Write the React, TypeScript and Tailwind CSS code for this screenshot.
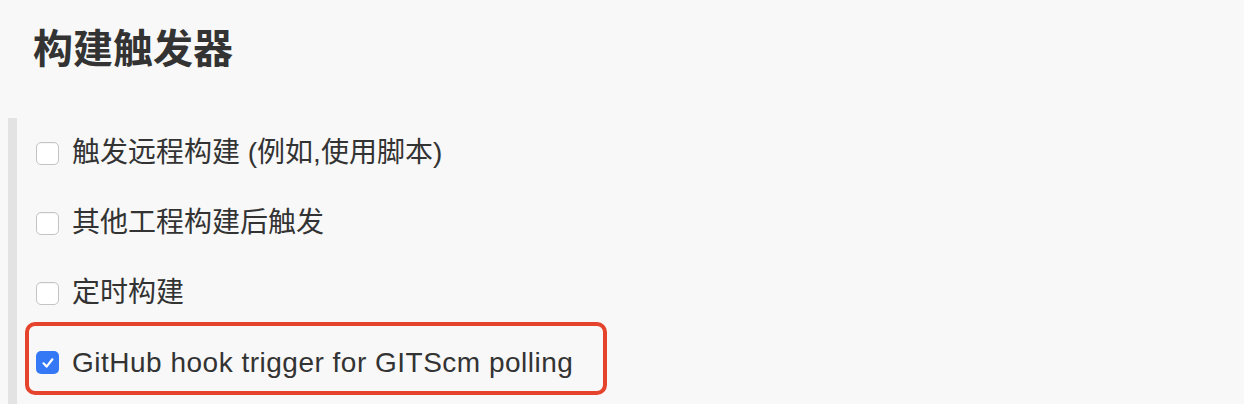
import React from 'react';

type Trigger = {
  id: number;
  label: string;
  checked: boolean;
};

const triggers: Trigger[] = [
  { id: 1, label: '触发远程构建 (例如,使用脚本)', checked: false },
  { id: 2, label: '其他工程构建后触发', checked: false },
  { id: 3, label: '定时构建', checked: false },
  { id: 4, label: 'GitHub hook trigger for GITScm polling', checked: true },
];

const Checkbox: React.FC<{ checked: boolean }> = ({ checked }) =>
  checked ? (
    <span className="flex h-[23px] w-[23px] shrink-0 items-center justify-center rounded-[5px] bg-[#3478f6]">
      <svg width="16" height="16" viewBox="0 0 16 16" fill="none">
        <path d="M3.5 8.3 L6.6 11.6 L12.4 4.3" stroke="white" strokeWidth="2.2" strokeLinecap="round" strokeLinejoin="round" />
      </svg>
    </span>
  ) : (
    <span className="block h-[23px] w-[23px] shrink-0 rounded-[5px] border border-[#c4c4c4] bg-white shadow-[inset_0_1px_1px_rgba(0,0,0,0.04)]" />
  );

export default function App() {
  const font = { fontFamily: '"Liberation Sans", "Noto Sans CJK SC", sans-serif' };

  return (
    <div className="flex h-[404px] w-[1244px] flex-col overflow-hidden bg-[#f8f8f8] text-[#333333]" style={font}>
      {/* section title */}
      <h1 className="pl-[33px] pt-[21px] text-[40px] font-bold leading-[56px] text-[#333333]">构建触发器</h1>

      <div className="mt-[41px] flex flex-1">
        <div className="ml-[8px] w-[9px] bg-[#e3e3e3]" />
        <div className="flex flex-1 flex-col">
          {triggers.map((t) =>
            t.checked ? (
              <div
                key={t.id}
                className="ml-[8px] mt-[-6px] flex h-[73px] w-[582px] items-center gap-[13px] rounded-[10px] border-4 border-[#e5432c] pl-[7px] pt-[8px]"
              >
                <Checkbox checked />
                <span className="text-[28px] leading-none tracking-[0.5px]">{t.label}</span>
              </div>
            ) : (
              <div key={t.id} className="flex h-[70px] items-center gap-[13px] pl-[19px]">
                <Checkbox checked={false} />
                <span className="text-[28px] leading-none">{t.label}</span>
              </div>
            )
          )}
        </div>
      </div>
    </div>
  );
}
